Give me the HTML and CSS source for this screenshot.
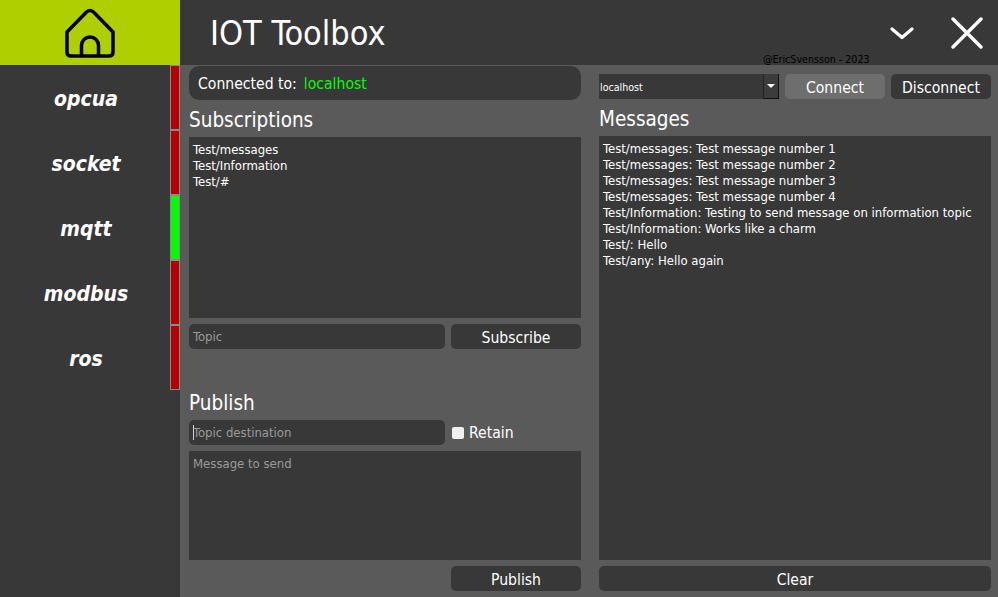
FILE: index.html
```html
<!DOCTYPE html>
<html>
<head>
  <meta charset="utf-8">
  <title>IOT Toolbox</title>
  <link rel="stylesheet" href="styles.css">
</head>
<body>
  <div class="app">
    <div class="topbar">
      <div class="logo">
        <svg width="52" height="52" viewBox="0 0 52 52" fill="none" stroke="#000" stroke-width="3.5" stroke-linejoin="round">
          <path d="M3 25 L22.5 5 Q26 2 29.5 5 L49 25 V45 Q49 49 45 49 H7 Q3 49 3 45 Z"/>
          <path d="M17.5 49 V38.5 A8.5 8.5 0 0 1 34.5 38.5 V49"/>
        </svg>
      </div>
      <div class="title">IOT Toolbox</div>
      <div class="winbtns">
        <svg width="24" height="14" viewBox="0 0 24 14" fill="none" stroke="#fff" stroke-width="3.2" stroke-linecap="round" stroke-linejoin="round">
          <path d="M2 3 L12 11.5 L22 3"/>
        </svg>
        <svg width="32" height="32" viewBox="0 0 32 32" fill="none" stroke="#fff" stroke-width="3.4" stroke-linecap="round">
          <path d="M2 2 L30 30 M30 2 L2 30"/>
        </svg>
      </div>
      <div class="credit">@EricSvensson - 2023</div>
    </div>
    <div class="body">
      <div class="sidebar">
        <div class="tab"><span class="tab-name">opcua</span><span class="status"></span></div>
        <div class="tab"><span class="tab-name">socket</span><span class="status"></span></div>
        <div class="tab"><span class="tab-name">mqtt</span><span class="status on"></span></div>
        <div class="tab"><span class="tab-name">modbus</span><span class="status"></span></div>
        <div class="tab"><span class="tab-name">ros</span><span class="status"></span></div>
      </div>
      <div class="main">
        <div class="col col-left">
          <div class="connected"><span>Connected to:</span><span class="host">localhost</span></div>
          <div class="heading h-subs">Subscriptions</div>
          <div class="box subs-list">Test/messages<br>Test/Information<br>Test/#</div>
          <div class="row">
            <input class="field" type="text" placeholder="Topic">
            <button class="btn btn-side">Subscribe</button>
          </div>
          <div class="heading h-pub">Publish</div>
          <div class="row">
            <div class="field-wrap">
              <input class="field" type="text" placeholder="Topic destination">
              <span class="caret"></span>
            </div>
            <label class="retain"><input type="checkbox">Retain</label>
          </div>
          <div class="box msg-box">Message to send</div>
          <div class="row row-end"><button class="btn btn-side">Publish</button></div>
        </div>
        <div class="col col-right">
          <div class="row row-conn">
            <div class="select"><span class="select-val">localhost</span><span class="select-arrow"></span></div>
            <button class="btn btn-connect">Connect</button>
            <button class="btn btn-disc">Disconnect</button>
          </div>
          <div class="heading h-msgs">Messages</div>
          <div class="box msg-list">Test/messages: Test message number 1<br>Test/messages: Test message number 2<br>Test/messages: Test message number 3<br>Test/messages: Test message number 4<br>Test/Information: Testing to send message on information topic<br>Test/Information: Works like a charm<br>Test/: Hello<br>Test/any: Hello again</div>
          <button class="btn btn-clear">Clear</button>
        </div>
      </div>
    </div>
  </div>
</body>
</html>
```

FILE: styles.css
```css
* {
  box-sizing: border-box;
}
body {
  margin: 0;
  background: #5a5a5a;
  color: #fff;
  font-family: "DejaVu Sans", sans-serif;
  font-stretch: condensed;
  overflow: hidden;
}
.app {
  width: 998px;
  height: 597px;
  display: flex;
  flex-direction: column;
}

/* top bar */
.topbar {
  position: relative;
  height: 65px;
  flex: none;
  display: flex;
  align-items: center;
  background: #383838;
}
.logo {
  width: 180px;
  height: 65px;
  display: flex;
  align-items: center;
  justify-content: center;
  background: #afcf00;
}
.title {
  margin-left: 30px;
  font-size: 34px;
  flex: 1;
}
.winbtns {
  display: flex;
  align-items: center;
  gap: 37px;
  padding-right: 15px;
}
.credit {
  position: absolute;
  left: 763px;
  top: 52px;
  font-size: 10.6px;
  line-height: 14px;
  color: #000;
}

/* sidebar */
.body {
  flex: 1;
  display: flex;
  min-height: 0;
}
.sidebar {
  width: 180px;
  flex: none;
  background: #383838;
}
.tab {
  height: 65px;
  display: flex;
}
.tab-name {
  flex: 1;
  text-align: center;
  font-size: 21px;
  line-height: 69px;
  font-weight: bold;
  font-style: italic;
  padding-left: 2px;
}
.status {
  width: 10px;
  background: #b40000;
  border: 1px solid #8a8a8a;
}
.status.on {
  background: #00ff00;
}

/* main area */
.main {
  flex: 1;
  display: flex;
  gap: 18px;
  padding: 1px 7px 6px 9px;
}
.col {
  width: 392px;
  display: flex;
  flex-direction: column;
}
.connected {
  height: 34px;
  display: flex;
  align-items: center;
  gap: 7px;
  padding: 1px 0 0 9px;
  font-size: 15.6px;
  background: #383838;
  border-radius: 10px;
}
.host {
  color: #00ff00;
}
.heading {
  font-size: 20.5px;
  line-height: 30px;
}
.h-subs {
  margin-top: 5px;
}
.h-pub {
  margin-top: 38px;
  line-height: 32px;
  margin-bottom: 1px;
}
.h-msgs {
  margin-top: 5px;
}
.box {
  background: #383838;
  font-size: 13px;
  line-height: 16px;
  padding: 5px 4px;
}
.subs-list {
  height: 181px;
  margin-top: 2px;
  margin-bottom: 6px;
}
.msg-box {
  height: 109px;
  margin-top: 6px;
  margin-bottom: 6px;
  color: #9a9a9a;
}
.msg-list {
  flex: 1;
  margin-top: 2px;
  margin-bottom: 6px;
}
.row {
  display: flex;
  gap: 6px;
}
.row-end {
  justify-content: flex-end;
}
.row-conn {
  margin-top: 8px;
}
.field-wrap {
  position: relative;
  width: 256px;
}
.field {
  width: 256px;
  height: 25px;
  border: 0;
  border-radius: 5px;
  background: #383838;
  color: #fff;
  font-family: inherit;
  font-stretch: condensed;
  font-size: 13px;
  padding: 0 4px;
  outline: none;
}
.field::placeholder {
  color: #9a9a9a;
  opacity: 1;
}
.caret {
  position: absolute;
  left: 4px;
  top: 5px;
  width: 1px;
  height: 15px;
  background: #d0d0d0;
}
.btn {
  height: 25px;
  border: 0;
  border-radius: 5px;
  background: #383838;
  color: #fff;
  font-family: inherit;
  font-stretch: condensed;
  font-size: 15.6px;
  padding: 3px 0 0;
}
.btn-side {
  width: 130px;
}
.btn-connect {
  width: 100px;
  background: #6e6e6e;
}
.btn-disc {
  width: 100px;
}
.btn-clear {
  width: 100%;
}
.retain {
  display: flex;
  align-items: center;
  gap: 5px;
  font-size: 15.6px;
  margin-left: 1px;
}
.retain input {
  appearance: none;
  width: 12px;
  height: 12px;
  margin: 0;
  background: #f0f0f0;
  border-radius: 2px;
}
.select {
  width: 180px;
  height: 25px;
  display: flex;
  background: #383838;
  font-size: 10.6px;
}
.select-val {
  flex: 1;
  line-height: 26px;
  padding-left: 1px;
}
.select-arrow {
  position: relative;
  width: 16px;
  background: #3c3c3c;
  border-left: 1px solid #222;
  border-right: 1px solid #111;
  border-bottom: 1px solid #111;
}
.select-arrow::after {
  content: "";
  position: absolute;
  left: 3px;
  top: 10px;
  border-left: 4px solid transparent;
  border-right: 4px solid transparent;
  border-top: 4px solid #fff;
}
```
